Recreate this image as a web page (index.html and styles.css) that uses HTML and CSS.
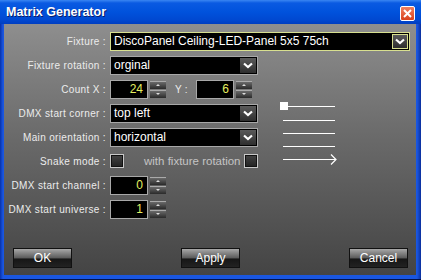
FILE: index.html
```html
<!DOCTYPE html>
<html lang="en">
<head>
    <meta charset="UTF-8">
    <link rel="stylesheet" href="styles.css">
    <title>Matrix Generator</title>
</head>
<body>
    <div class="window">
        <div class="titlebar">
            <span class="title">Matrix Generator</span>
            <span class="close">
                <svg width="9" height="9" viewBox="0 0 9 9"><path d="M1 1L8 8M8 1L1 8" stroke="#fff" stroke-width="2"/></svg>
            </span>
        </div>
        <div class="client">
            <div class="form">
                <div class="lbl">Fixture :</div>
                <div class="combo wide focus">
                    <span class="combo-text">DiscoPanel Ceiling-LED-Panel 5x5 75ch</span>
                    <span class="drop"><svg width="10" height="7" viewBox="0 0 10 7"><path d="M1 1.5L5 5L9 1.5" fill="none" stroke="#fff" stroke-width="2.2"/></svg></span>
                </div>

                <div class="lbl">Fixture rotation :</div>
                <div class="combo">
                    <span class="combo-text">orginal</span>
                    <span class="drop"><svg width="10" height="7" viewBox="0 0 10 7"><path d="M1 1.5L5 5L9 1.5" fill="none" stroke="#fff" stroke-width="2.2"/></svg></span>
                </div>

                <div class="lbl">Count X :</div>
                <div class="inline">
                    <div class="spin">
                        <span class="spin-field">24</span>
                        <span class="spin-btns"><span class="up"></span><span class="down"></span></span>
                    </div>
                    <span class="lbl y-lbl">Y :</span>
                    <div class="spin">
                        <span class="spin-field">6</span>
                        <span class="spin-btns"><span class="up"></span><span class="down"></span></span>
                    </div>
                </div>

                <div class="lbl">DMX start corner :</div>
                <div class="combo">
                    <span class="combo-text">top left</span>
                    <span class="drop"><svg width="10" height="7" viewBox="0 0 10 7"><path d="M1 1.5L5 5L9 1.5" fill="none" stroke="#fff" stroke-width="2.2"/></svg></span>
                </div>
                <svg class="diagram" width="60" height="66" viewBox="0 0 60 66">
                    <rect x="0" y="1" width="8" height="8" fill="#fff"/>
                    <g stroke="#fff" stroke-width="1.2" fill="none">
                        <path d="M8 5.5H55"/>
                        <path d="M3 19.5H55"/>
                        <path d="M3 32.5H55"/>
                        <path d="M3 45.5H55"/>
                        <path d="M3 58.5H56M51 53.5L56 58.5L51 63.5"/>
                    </g>
                </svg>

                <div class="lbl">Main orientation :</div>
                <div class="combo">
                    <span class="combo-text">horizontal</span>
                    <span class="drop"><svg width="10" height="7" viewBox="0 0 10 7"><path d="M1 1.5L5 5L9 1.5" fill="none" stroke="#fff" stroke-width="2.2"/></svg></span>
                </div>

                <div class="lbl">Snake mode :</div>
                <div class="inline narrow">
                    <span class="check"></span>
                    <span class="dim">with fixture rotation</span>
                    <span class="check"></span>
                </div>

                <div class="lbl">DMX start channel :</div>
                <div class="spin">
                    <span class="spin-field">0</span>
                    <span class="spin-btns"><span class="up"></span><span class="down"></span></span>
                </div>

                <div class="lbl">DMX start universe :</div>
                <div class="spin">
                    <span class="spin-field">1</span>
                    <span class="spin-btns"><span class="up"></span><span class="down"></span></span>
                </div>
            </div>

            <div class="buttons">
                <button class="btn">OK</button>
                <button class="btn">Apply</button>
                <button class="btn">Cancel</button>
            </div>
        </div>
    </div>
</body>
</html>
```

FILE: styles.css
```css
body {
    margin: 0;
    background-color: #000;
    font-family: "Liberation Sans", Arial, sans-serif;
}

.window {
    width: 421px;
    height: 280px;
    box-sizing: border-box;
    background: linear-gradient(to right, #0831a8, #1a56e0 3px, #1a56e0 calc(100% - 4px), #0a2f9c);
    border-bottom: 1px solid #02124a;
    display: flex;
    flex-direction: column;
}

.titlebar {
    height: 24px;
    flex-shrink: 0;
    display: flex;
    align-items: center;
    justify-content: space-between;
    padding: 0 6px 0 6px;
    background: linear-gradient(to bottom, #3a86f2 0, #0a5ae2 3px, #0052dc 12px, #0048d0 20px, #003ec0 24px);
}

.title {
    color: #fff;
    font-weight: bold;
    font-size: 12.5px;
    text-shadow: 1px 1px 0 #0a1c6a;
}

.close {
    width: 13px;
    height: 13px;
    margin-top: 2px;
    border: 1px solid #fff;
    border-radius: 2px;
    background: linear-gradient(to bottom, #f08060, #d8401c);
    display: flex;
    align-items: center;
    justify-content: center;
}

.client {
    flex: 1;
    margin: 0 5px 4px 4px;
    background: linear-gradient(to bottom, #8e8e8e, #6a6a6a 45%, #444 100%);
    display: flex;
    flex-direction: column;
}

.form {
    display: grid;
    grid-template-columns: 102px 148px 1fr;
    grid-auto-rows: 24px;
    column-gap: 4px;
    align-items: center;
    padding-top: 5px;
}

.lbl {
    color: #ececec;
    font-size: 10px;
    letter-spacing: 0.35px;
    text-align: right;
    grid-column: 1;
}

.combo {
    grid-column: 2;
    height: 19px;
    box-sizing: border-box;
    border: 1px solid #a8a8a8;
    background-color: #000;
    display: flex;
    align-items: center;
    justify-content: space-between;
    padding: 0 1px 0 3px;
}

.combo.wide {
    grid-column: 2 / 4;
    width: 300px;
}

.combo.focus {
    border-color: #d8e090;
}

.combo-text {
    color: #fff;
    font-size: 12px;
}

.drop {
    width: 16px;
    height: 15px;
    box-sizing: border-box;
    background: linear-gradient(to bottom, #5a5a5a, #2e2e2e);
    display: flex;
    align-items: center;
    justify-content: center;
}

.focus .drop {
    border: 1px solid #d8e090;
}

.inline {
    grid-column: 2 / 4;
    display: flex;
    align-items: center;
}

.inline.narrow {
    grid-column: 2;
}

.spin {
    grid-column: 2;
    display: flex;
    align-items: center;
    gap: 2px;
}

.spin-field {
    width: 38px;
    height: 19px;
    box-sizing: border-box;
    border: 1px solid #a8a8a8;
    background-color: #000;
    color: #e6f060;
    font-size: 12px;
    text-align: right;
    padding-right: 4px;
    line-height: 17px;
}

.spin-btns {
    display: flex;
    flex-direction: column;
    gap: 1px;
}

.spin-btns span {
    width: 16px;
    height: 8px;
    box-sizing: border-box;
    border-top: 1px solid #aaa;
    background: linear-gradient(to bottom, #6a6a6a, #2a2a2a);
    position: relative;
}

.spin-btns span::after {
    content: "";
    position: absolute;
    left: 6px;
    top: 2px;
    border-left: 2px solid transparent;
    border-right: 2px solid transparent;
}

.spin-btns .up::after {
    border-bottom: 2px solid #ddd;
}

.spin-btns .down::after {
    border-top: 2px solid #ddd;
}

.y-lbl {
    width: 22px;
    margin-right: 8px;
}

.check {
    width: 14px;
    height: 14px;
    flex-shrink: 0;
    box-sizing: border-box;
    border: 1px solid #c8c8c8;
    background: linear-gradient(to bottom, #444, #222);
    box-shadow: inset 0 0 0 1px #111;
}

.dim {
    color: #c4c4c4;
    font-size: 11.5px;
    white-space: nowrap;
    margin: 0 3px 0 20px;
}

.diagram {
    grid-column: 3;
    grid-row: 4 / 7;
    align-self: start;
    margin: 0 0 0 18px;
}

.buttons {
    display: flex;
    justify-content: space-between;
    padding: 0 8px 0 9px;
    margin-top: 27px;
}

.btn {
    width: 59px;
    height: 20px;
    border: 1px solid #111;
    background: linear-gradient(to bottom, #a8a8a8, #5a5a5a 50%, #161616 55%, #222);
    color: #fff;
    font-family: "Liberation Sans", Arial, sans-serif;
    font-size: 12px;
    padding: 0;
}
```
